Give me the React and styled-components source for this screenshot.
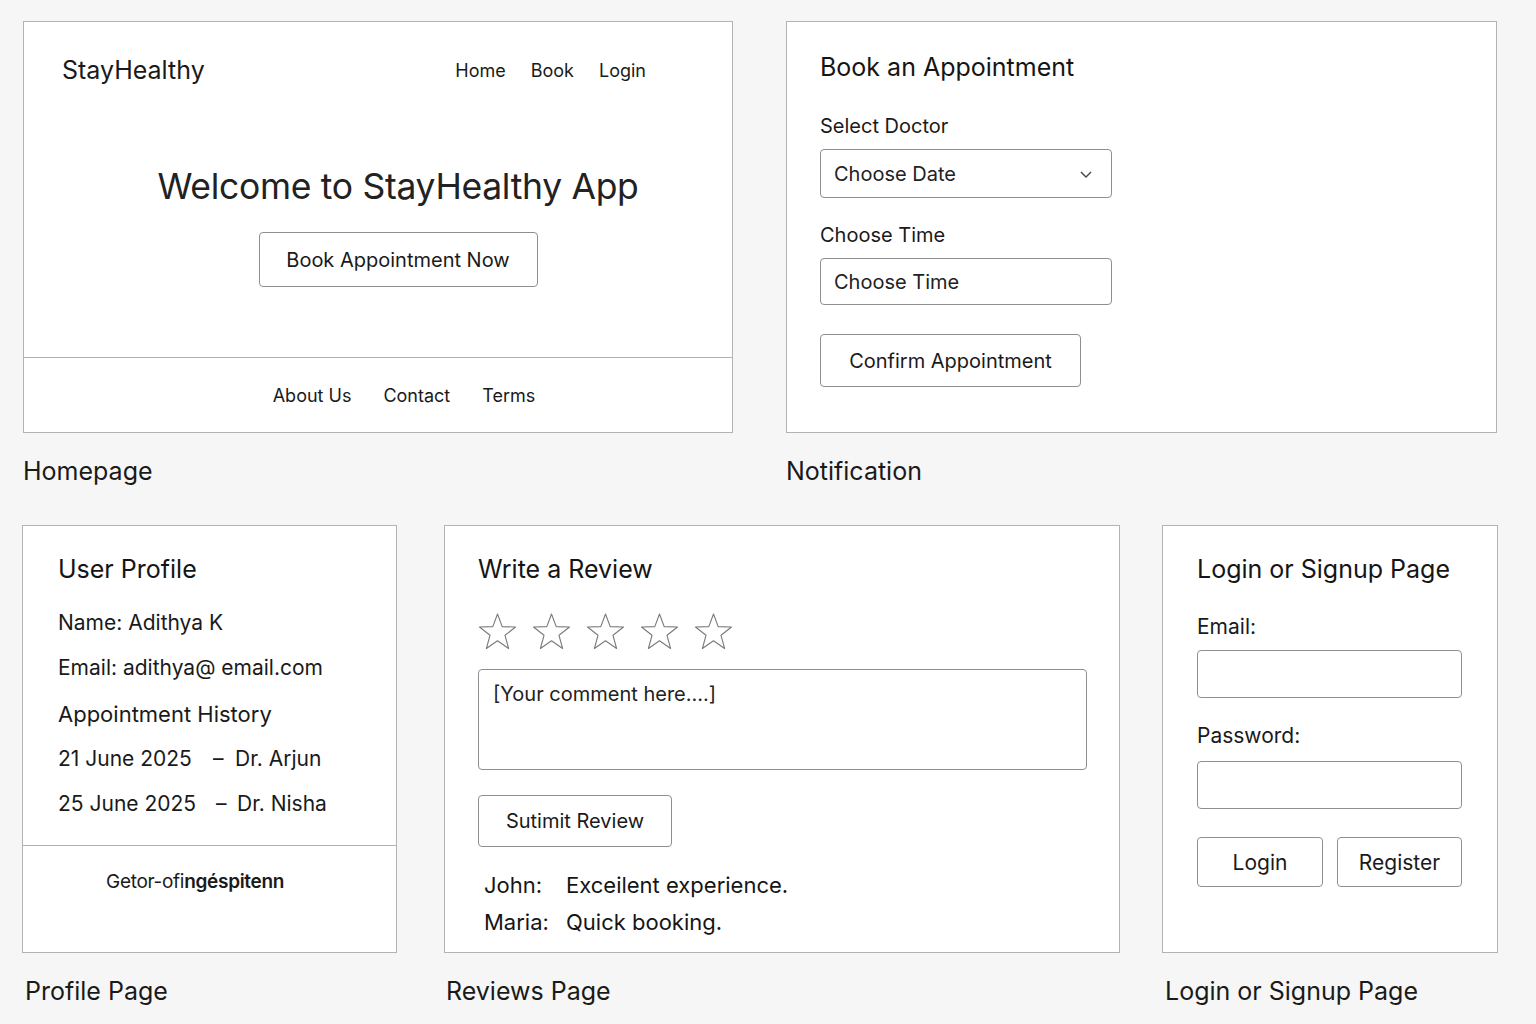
import React from "react";
import styled, { createGlobalStyle } from "styled-components";

const Global = createGlobalStyle`
  html, body { margin: 0; padding: 0; background: #f6f6f6; }
  body { font-family: Inter, "Noto Sans", "Liberation Sans", sans-serif; color: #1b1b1b; }
  * { box-sizing: border-box; }
`;

const Page = styled.div`
  width: 1536px;
  height: 1024px;
  padding: 21px 0 0 23px;
  overflow: hidden;
`;

const Row = styled.div`
  display: flex;
  align-items: flex-start;
  margin-top: ${(p) => p.$mt || "0"};
  margin-left: ${(p) => p.$ml || "0"};
`;

const Column = styled.div`
  display: flex;
  flex-direction: column;
  width: ${(p) => p.$w}px;
  margin-left: ${(p) => p.$ml || 0}px;
`;

const Card = styled.div`
  height: ${(p) => p.$h}px;
  background: #fff;
  border: 1px solid #b3b3b3;
  display: flex;
  flex-direction: column;
  padding: ${(p) => p.$pad || "0"};
`;

const Caption = styled.div`
  margin-top: 23px;
  margin-left: ${(p) => p.$ml || "0"};
  font-size: 25px;
  line-height: 30px;
  color: #1a1a1a;
`;

/* Homepage */
const HomeMain = styled.div`
  height: 336px;
  border-bottom: 1px solid #b3b3b3;
  display: flex;
  flex-direction: column;
`;

const Header = styled.div`
  display: flex;
  justify-content: space-between;
  align-items: center;
  padding: 33px 86px 0 38px;
`;

const Brand = styled.div`
  font-size: 25px;
  line-height: 30px;
  color: #1a1a1a;
`;

const Nav = styled.nav`
  display: flex;
  gap: 25px;
  font-size: 18px;
`;

const NavLink = styled.span`
  color: #1a1a1a;
`;

const Hero = styled.div`
  display: flex;
  flex-direction: column;
  align-items: center;
  padding-left: 40px;
  margin-top: 79px;
`;

const HeroTitle = styled.h1`
  margin: 0;
  font-size: 35.5px;
  line-height: 46px;
  font-weight: 400;
  color: #222;
  letter-spacing: -0.3px;
`;

const Button = styled.button`
  font-family: inherit;
  background: #fff;
  border: 1px solid #8f8f8f;
  border-radius: 4px;
  color: #1a1a1a;
  font-size: ${(p) => p.$fs || 20}px;
  width: ${(p) => p.$w}px;
  height: ${(p) => p.$h}px;
  margin-top: ${(p) => p.$mt || 0}px;
  padding: 0;
  text-align: center;
  cursor: pointer;
`;

const HomeFooter = styled.div`
  flex: 1;
  display: flex;
  align-items: center;
  justify-content: center;
  gap: 32px;
  padding-left: 52px;
  font-size: 18px;
`;

/* Generic */
const CardTitle = styled.h2`
  margin: 0;
  font-size: 25px;
  line-height: 30px;
  font-weight: 400;
  color: #151515;
`;

const Label = styled.div`
  font-size: ${(p) => p.$fs || 20}px;
  line-height: 24px;
  margin-top: ${(p) => p.$mt}px;
  color: #1a1a1a;
`;

const Box = styled.div`
  width: ${(p) => p.$w}px;
  height: ${(p) => p.$h}px;
  margin-top: ${(p) => p.$mt}px;
  border: 1px solid #8f8f8f;
  border-radius: 4px;
  background: #fff;
  display: flex;
  align-items: ${(p) => (p.$top ? "flex-start" : "center")};
  justify-content: space-between;
  padding: ${(p) => (p.$top ? "12px 14px" : "0 18px 0 13px")};
  font-size: 20px;
  color: #222;
`;

/* Profile */
const InfoList = styled.div`
  margin-top: 16px;
  display: flex;
  flex-direction: column;
`;

const InfoLine = styled.div`
  font-size: ${(p) => p.$fs || 21}px;
  line-height: 45px;
  color: #1a1a1a;
  display: flex;
  margin-top: ${(p) => p.$mt || 0}px;
`;

const DateCell = styled.span`
  width: ${(p) => p.$w}px;
`;

const Dash = styled.span`
  width: ${(p) => p.$w}px;
`;

const ProfileMain = styled.div`
  height: 320px;
  border-bottom: 1px solid #b3b3b3;
  padding: 28px 0 0 35px;
`;

const ProfileFooter = styled.div`
  padding: 24px 0 0 83px;
  font-size: 19px;
  line-height: 24px;
  color: #1a1a1a;
  letter-spacing: -0.3px;
`;

const Bold = styled.span`
  font-weight: 600;
`;

/* Reviews */
const Stars = styled.div`
  display: flex;
  gap: 15px;
  margin-top: 29px;
`;

const ReviewList = styled.div`
  margin-top: 20px;
  padding-left: 6px;
  display: flex;
  flex-direction: column;
`;

const ReviewRow = styled.div`
  display: flex;
  font-size: 22px;
  line-height: 37px;
  color: #151515;
`;

const ReviewName = styled.span`
  width: 82px;
`;

const ButtonRow = styled.div`
  display: flex;
  gap: 14px;
  margin-top: 28px;
`;

const Star = () => (
  <svg width="39" height="37" viewBox="0 0 39 37">
    <polygon
      points="19.5,1 24.2,13.6 37.5,14 27,22.3 30.6,35.5 19.5,27.8 8.4,35.5 12,22.3 1.5,14 14.8,13.6"
      fill="none"
      stroke="#7a7a7a"
      strokeWidth="1.1"
      strokeLinejoin="round"
    />
  </svg>
);

const Chevron = () => (
  <svg width="14" height="10" viewBox="0 0 14 10">
    <path d="M2 3 L7 8 L12 3" fill="none" stroke="#444" strokeWidth="1.4" />
  </svg>
);

export default function App() {
  return (
    <>
      <Global />
      <Page>
        <Row>
          <Column $w={710}>
            <Card $h={412}>
              <HomeMain>
                <Header>
                  <Brand>StayHealthy</Brand>
                  <Nav>
                    <NavLink>Home</NavLink>
                    <NavLink>Book</NavLink>
                    <NavLink>Login</NavLink>
                  </Nav>
                </Header>
                <Hero>
                  <HeroTitle>Welcome to StayHealthy App</HeroTitle>
                  <Button $w={279} $h={55} $mt={22}>Book Appointment Now</Button>
                </Hero>
              </HomeMain>
              <HomeFooter>
                <NavLink>About Us</NavLink>
                <NavLink>Contact</NavLink>
                <NavLink>Terms</NavLink>
              </HomeFooter>
            </Card>
            <Caption>Homepage</Caption>
          </Column>
          <Column $w={711} $ml={53}>
            <Card $h={412} $pad="30px 0 0 33px">
              <CardTitle>Book an Appointment</CardTitle>
              <Label $mt={32}>Select Doctor</Label>
              <Box $w={292} $h={49} $mt={11}>
                Choose Date
                <Chevron />
              </Box>
              <Label $mt={25}>Choose Time</Label>
              <Box $w={292} $h={47} $mt={11}>Choose Time</Box>
              <Button $w={261} $h={53} $mt={29}>Confirm Appointment</Button>
            </Card>
            <Caption>Notification</Caption>
          </Column>
        </Row>

        <Row $mt="39px" $ml="-1px">
          <Column $w={375}>
            <Card $h={428}>
              <ProfileMain>
                <CardTitle>User Profile</CardTitle>
                <InfoList>
                  <InfoLine>Name: Adithya K</InfoLine>
                  <InfoLine>Email: adithya@ email.com</InfoLine>
                  <InfoLine $fs={22} $mt={2}>Appointment History</InfoLine>
                  <InfoLine $mt={-1}>
                    <DateCell $w={155}>21 June 2025</DateCell>
                    <Dash $w={22}>–</Dash>
                    <span>Dr. Arjun</span>
                  </InfoLine>
                  <InfoLine>
                    <DateCell $w={158}>25 June 2025</DateCell>
                    <Dash $w={21}>–</Dash>
                    <span>Dr. Nisha</span>
                  </InfoLine>
                </InfoList>
              </ProfileMain>
              <ProfileFooter>
                Getor-ofi<Bold>ngéspitenn</Bold>
              </ProfileFooter>
            </Card>
            <Caption $ml="3px">Profile Page</Caption>
          </Column>
          <Column $w={676} $ml={47}>
            <Card $h={428} $pad="28px 0 0 33px">
              <CardTitle>Write a Review</CardTitle>
              <Stars>
                <Star />
                <Star />
                <Star />
                <Star />
                <Star />
              </Stars>
              <Box $w={609} $h={101} $mt={19} $top>
                [Your comment here....]
              </Box>
              <Button $w={194} $h={52} $mt={25}>Sutimit Review</Button>
              <ReviewList>
                <ReviewRow>
                  <ReviewName>John:</ReviewName>
                  <span>Exceilent experience.</span>
                </ReviewRow>
                <ReviewRow>
                  <ReviewName>Maria:</ReviewName>
                  <span>Quick booking.</span>
                </ReviewRow>
              </ReviewList>
            </Card>
            <Caption $ml="2px">Reviews Page</Caption>
          </Column>
          <Column $w={336} $ml={42}>
            <Card $h={428} $pad="28px 0 0 34px">
              <CardTitle>Login or Signup Page</CardTitle>
              <Label $fs={21} $mt={31}>Email:</Label>
              <Box $w={265} $h={48} $mt={11} />
              <Label $fs={21} $mt={26}>Password:</Label>
              <Box $w={265} $h={48} $mt={13} />
              <ButtonRow>
                <Button $w={126} $h={50} $fs={21}>Login</Button>
                <Button $w={125} $h={50} $fs={21}>Register</Button>
              </ButtonRow>
            </Card>
            <Caption $ml="3px">Login or Signup Page</Caption>
          </Column>
        </Row>
      </Page>
    </>
  );
}
